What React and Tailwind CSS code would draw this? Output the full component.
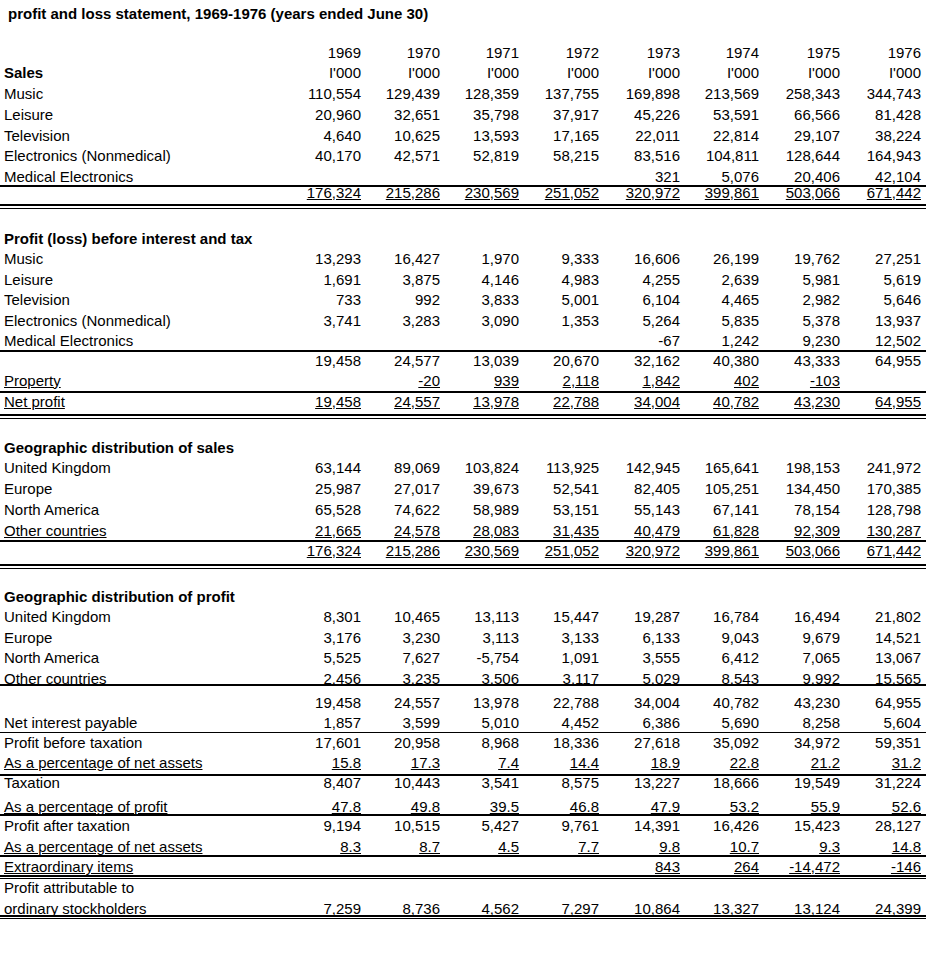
import React from "react";

const COLS = "grid grid-cols-[281px_80px_79px_79px_80px_81px_79px_81px_81px]";
const E = "";

// each row: h / pt are full class names, line = none | thin | thick | double | double4
// for double rows h is the height above the rule
const rows = [
  { h: "h-[21px]", pt: "pt-[7.5px]", title: "profit and loss statement, 1969-1976 (years ended June 30)" },
  { h: "h-[21px]" },
  { h: "h-[20.75px]", pt: "pt-[4.65px]", vals: ["1969", "1970", "1971", "1972", "1973", "1974", "1975", "1976"] },
  { h: "h-[20.75px]", pt: "pt-[4.65px]", label: "Sales", bold: true, vals: Array(8).fill("I'000") },
  { h: "h-[20.75px]", pt: "pt-[4.65px]", label: "Music", vals: ["110,554", "129,439", "128,359", "137,755", "169,898", "213,569", "258,343", "344,743"] },
  { h: "h-[20.75px]", pt: "pt-[4.65px]", label: "Leisure", vals: ["20,960", "32,651", "35,798", "37,917", "45,226", "53,591", "66,566", "81,428"] },
  { h: "h-[20.75px]", pt: "pt-[4.65px]", label: "Television", vals: ["4,640", "10,625", "13,593", "17,165", "22,011", "22,814", "29,107", "38,224"] },
  { h: "h-[20.75px]", pt: "pt-[4.65px]", label: "Electronics (Nonmedical)", vals: ["40,170", "42,571", "52,819", "58,215", "83,516", "104,811", "128,644", "164,943"] },
  { h: "h-[20.75px]", pt: "pt-[4.65px]", label: "Medical Electronics", line: "thick", vals: [E, E, E, E, "321", "5,076", "20,406", "42,104"] },
  { h: "h-[16.25px]", pt: "pt-0", u: true, line: "double", vals: ["176,324", "215,286", "230,569", "251,052", "320,972", "399,861", "503,066", "671,442"] },
  { h: "h-[19.5px]" },
  { h: "h-[20.5px]", pt: "pt-[4.65px]", label: "Profit (loss) before interest and tax", bold: true },
  { h: "h-[20.5px]", pt: "pt-[4.65px]", label: "Music", vals: ["13,293", "16,427", "1,970", "9,333", "16,606", "26,199", "19,762", "27,251"] },
  { h: "h-[20.5px]", pt: "pt-[4.65px]", label: "Leisure", vals: ["1,691", "3,875", "4,146", "4,983", "4,255", "2,639", "5,981", "5,619"] },
  { h: "h-[20.5px]", pt: "pt-[4.65px]", label: "Television", vals: ["733", "992", "3,833", "5,001", "6,104", "4,465", "2,982", "5,646"] },
  { h: "h-[20.5px]", pt: "pt-[4.65px]", label: "Electronics (Nonmedical)", vals: ["3,741", "3,283", "3,090", "1,353", "5,264", "5,835", "5,378", "13,937"] },
  { h: "h-[21px]", pt: "pt-[4.65px]", label: "Medical Electronics", line: "thick", vals: [E, E, E, E, "-67", "1,242", "9,230", "12,502"] },
  { h: "h-[19px]", pt: "pt-[3.15px]", vals: ["19,458", "24,577", "13,039", "20,670", "32,162", "40,380", "43,333", "64,955"] },
  { h: "h-[22px]", pt: "pt-[4.15px]", label: "Property", u: true, line: "thick", vals: [E, "-20", "939", "2,118", "1,842", "402", "-103", E] },
  { h: "h-[21px]", pt: "pt-[3.85px]", label: "Net profit", u: true, line: "double", vals: ["19,458", "24,557", "13,978", "22,788", "34,004", "40,782", "43,230", "64,955"] },
  { h: "h-[18.5px]" },
  { h: "h-[20.75px]", pt: "pt-[4.65px]", label: "Geographic distribution of sales", bold: true },
  { h: "h-[20.75px]", pt: "pt-[4.65px]", label: "United Kingdom", vals: ["63,144", "89,069", "103,824", "113,925", "142,945", "165,641", "198,153", "241,972"] },
  { h: "h-[20.75px]", pt: "pt-[4.65px]", label: "Europe", vals: ["25,987", "27,017", "39,673", "52,541", "82,405", "105,251", "134,450", "170,385"] },
  { h: "h-[20.75px]", pt: "pt-[4.65px]", label: "North America", vals: ["65,528", "74,622", "58,989", "53,151", "55,143", "67,141", "78,154", "128,798"] },
  { h: "h-[21.5px]", pt: "pt-[4.65px]", label: "Other countries", u: true, line: "thick", vals: ["21,665", "24,578", "28,083", "31,435", "40,479", "61,828", "92,309", "130,287"] },
  { h: "h-[22px]", pt: "pt-[3.15px]", u: true, line: "double", vals: ["176,324", "215,286", "230,569", "251,052", "320,972", "399,861", "503,066", "671,442"] },
  { h: "h-[17.5px]" },
  { h: "h-[20.5px]", pt: "pt-[4.65px]", label: "Geographic distribution of profit", bold: true },
  { h: "h-[20.5px]", pt: "pt-[4.65px]", label: "United Kingdom", vals: ["8,301", "10,465", "13,113", "15,447", "19,287", "16,784", "16,494", "21,802"] },
  { h: "h-[20.5px]", pt: "pt-[4.65px]", label: "Europe", vals: ["3,176", "3,230", "3,113", "3,133", "6,133", "9,043", "9,679", "14,521"] },
  { h: "h-[20.5px]", pt: "pt-[4.65px]", label: "North America", vals: ["5,525", "7,627", "-5,754", "1,091", "3,555", "6,412", "7,065", "13,067"] },
  { h: "h-[18px]", pt: "pt-[4.65px]", label: "Other countries", u: true, line: "thick", vals: ["2,456", "3,235", "3,506", "3,117", "5,029", "8,543", "9,992", "15,565"] },
  { h: "h-[26px]", pt: "pt-[10.65px]", vals: ["19,458", "24,557", "13,978", "22,788", "34,004", "40,782", "43,230", "64,955"] },
  { h: "h-[20.5px]", pt: "pt-[4.95px]", label: "Net interest payable", line: "thin", vals: ["1,857", "3,599", "5,010", "4,452", "6,386", "5,690", "8,258", "5,604"] },
  { h: "h-[20.5px]", pt: "pt-[4.35px]", label: "Profit before taxation", vals: ["17,601", "20,958", "8,968", "18,336", "27,618", "35,092", "34,972", "59,351"] },
  { h: "h-[23px]", pt: "pt-[4.45px]", label: "As a percentage of net assets", u: true, line: "thick", vals: ["15.8", "17.3", "7.4", "14.4", "18.9", "22.8", "21.2", "31.2"] },
  { h: "h-[19.5px]", pt: "pt-[1.45px]", label: "Taxation", vals: ["8,407", "10,443", "3,541", "8,575", "13,227", "18,666", "19,549", "31,224"] },
  { h: "h-[20.25px]", pt: "pt-[5.35px]", label: "As a percentage of profit", u: true, line: "thick", vals: ["47.8", "49.8", "39.5", "46.8", "47.9", "53.2", "55.9", "52.6"] },
  { h: "h-[20.5px]", pt: "pt-[4.6px]", label: "Profit after taxation", vals: ["9,194", "10,515", "5,427", "9,761", "14,391", "16,426", "15,423", "28,127"] },
  { h: "h-[20.5px]", pt: "pt-[4.6px]", label: "As a percentage of net assets", u: true, line: "thick", vals: ["8.3", "8.7", "4.5", "7.7", "9.8", "10.7", "9.3", "14.8"] },
  { h: "h-[17.75px]", pt: "pt-[4.6px]", label: "Extraordinary items", u: true, line: "double4", vals: [E, E, E, E, "843", "264", "-14,472", "-146"] },
  { h: "h-[20.5px]", pt: "pt-[3.65px]", label: "Profit attributable to" },
  { h: "h-[16px]", pt: "pt-[3.65px]", label: "ordinary stockholders", u: true, line: "double4", vals: ["7,259", "8,736", "4,562", "7,297", "10,864", "13,327", "13,124", "24,399"] },
];

function Cells({ row }) {
  const border =
    row.line === "thick"
      ? "border-b-2 border-black"
      : row.line === "thin"
      ? "border-b border-black"
      : "";

  if (row.title) {
    return (
      <div className={`${row.h} ${row.pt} pl-2 leading-[11px] font-bold whitespace-nowrap`}>
        {row.title}
      </div>
    );
  }
  return (
    <div className={`${COLS} ${row.h} ${row.pt || ""} ${border} leading-[11px]`}>
      <div className={`pl-1 whitespace-nowrap ${row.bold ? "font-bold" : ""}`}>
        {row.label && <span className={row.u ? "underline" : ""}>{row.label}</span>}
      </div>
      {(row.vals || Array(8).fill(E)).map((v, i) => (
        <div key={i} className="text-right whitespace-nowrap">
          {v && <span className={row.u ? "underline" : ""}>{v}</span>}
        </div>
      ))}
    </div>
  );
}

function Row({ row }) {
  return (
    <div>
      <Cells row={row} />
      {row.line === "double" && (
        <div className="h-[5px] border-t-2 border-b border-black" />
      )}
      {row.line === "double4" && (
        <div className="h-[4px] border-t-2 border-b border-black" />
      )}
    </div>
  );
}

export default function App() {
  return (
    <div className="w-[926px] h-[960px] bg-white text-black text-[15px] font-['Liberation_Sans',Arial,sans-serif]">
      {rows.map((row, index) => (
        <Row row={row} key={index} />
      ))}
    </div>
  );
}
